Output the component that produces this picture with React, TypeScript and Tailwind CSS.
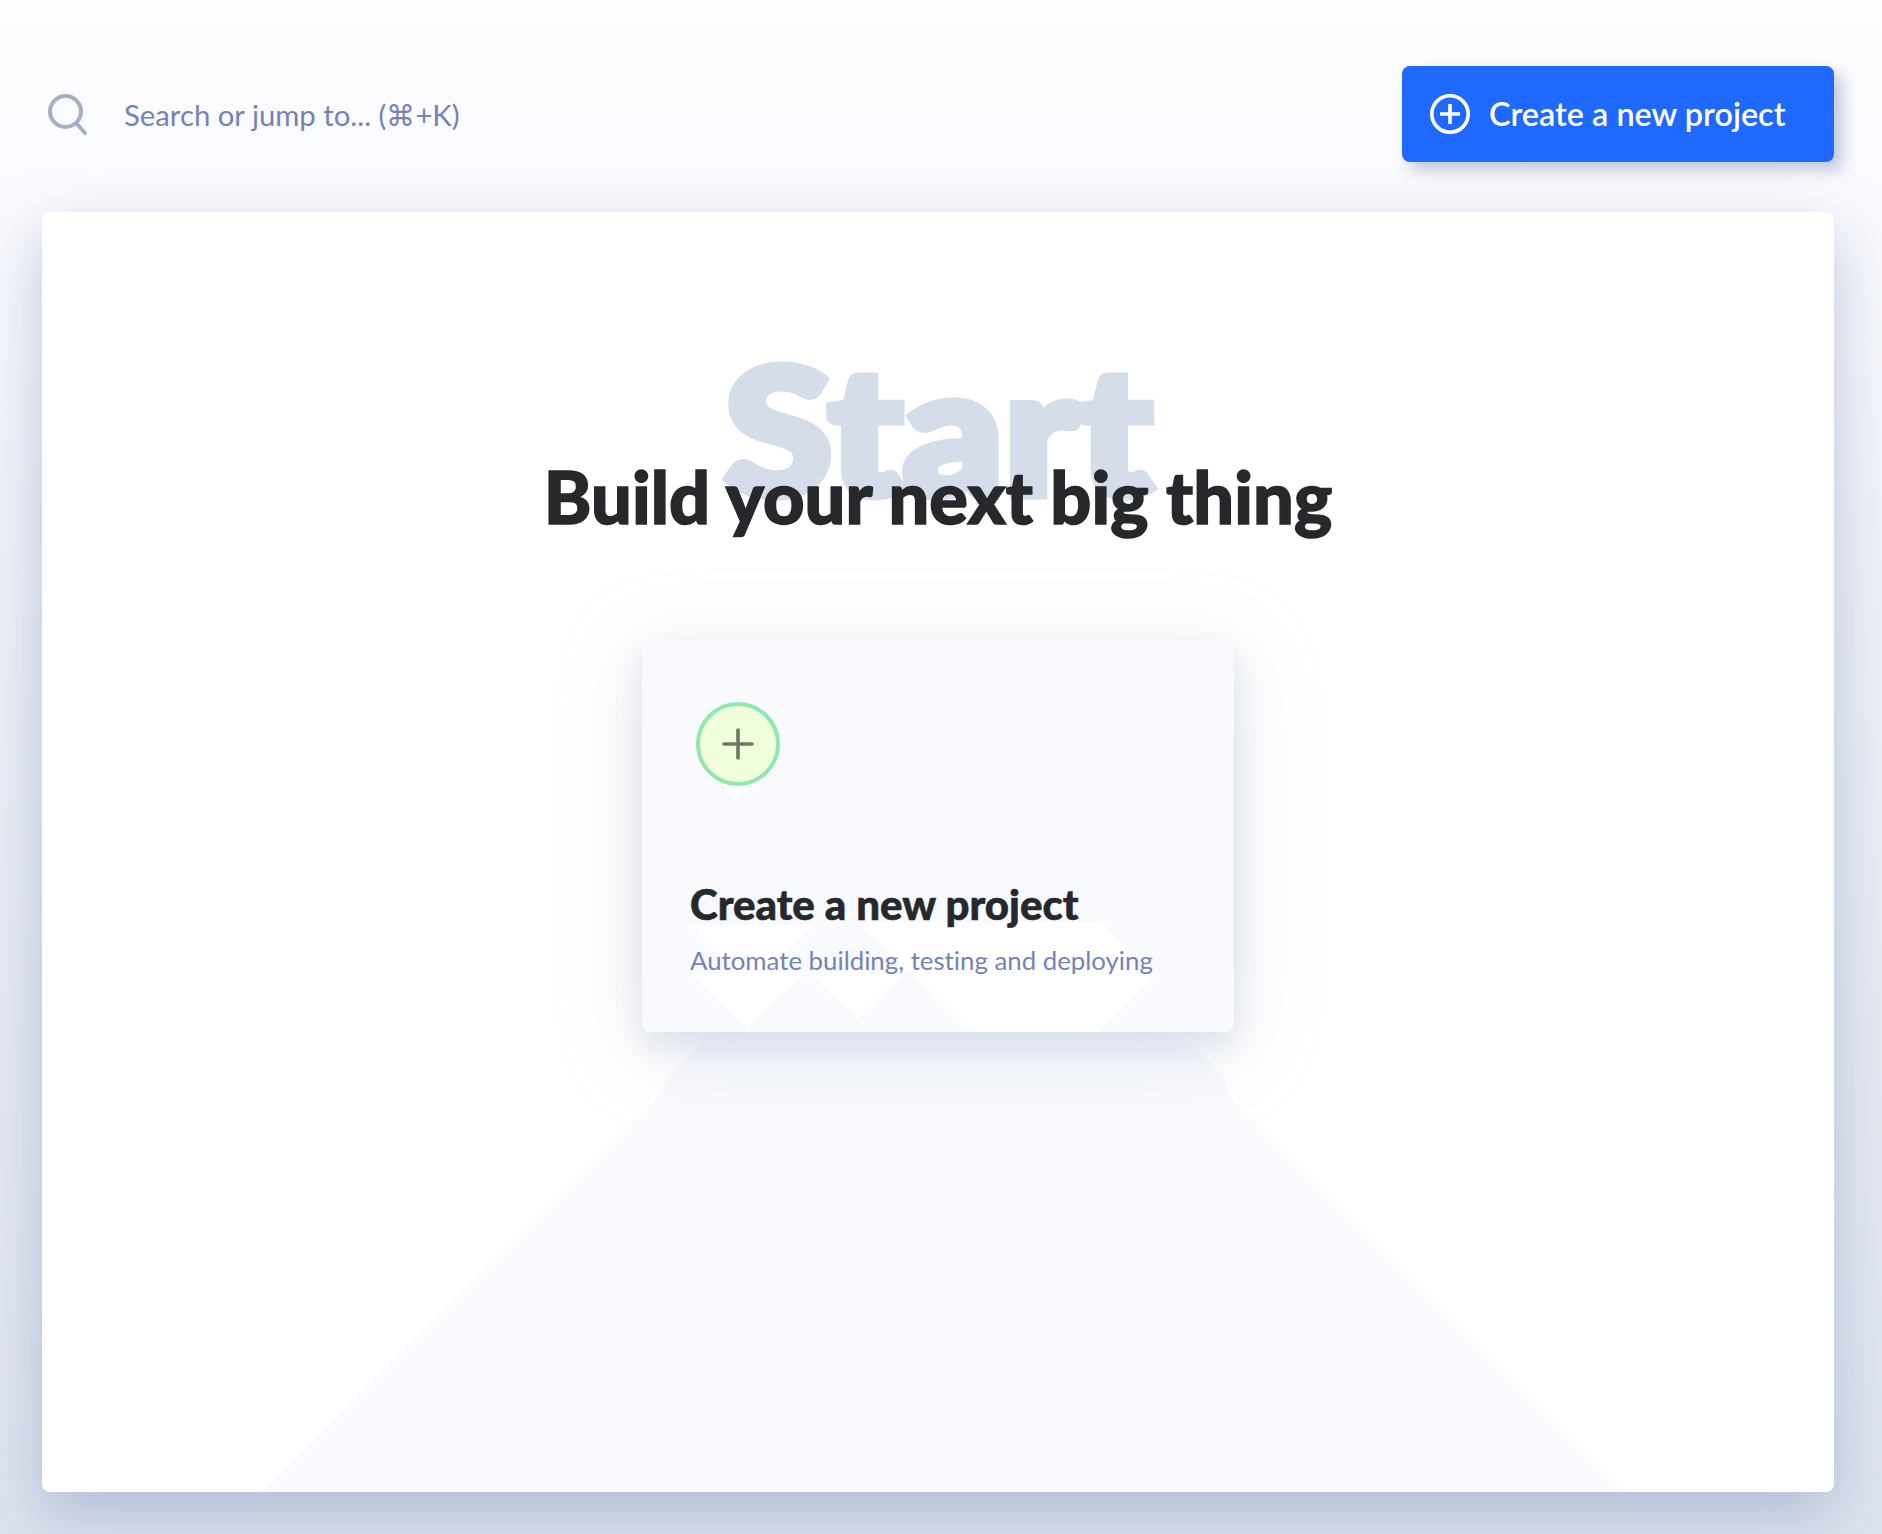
export default function App() {
  return (
    <div className="relative w-[1882px] h-[1534px] overflow-hidden bg-[linear-gradient(180deg,#fdfdff_0%,#f9fafe_14%,#eceff6_45%,#dde2ee_100%)] font-['Lato',sans-serif]">
      <header className="h-[212px] pl-[48px] pr-[48px] flex items-start justify-between">
        <div className="flex items-center mt-[91px] h-[48px]">
          <svg width="40" height="42" viewBox="0 0 40 42" fill="none" stroke="#a4aec4" strokeWidth="4" strokeLinecap="round">
            <circle cx="17.5" cy="17.5" r="15.5" />
            <path d="M29 30 L37 39" />
          </svg>
          <span className="ml-[36px] text-[29.3px] leading-[48px] text-[#7582b5]">Search or jump to... (⌘+K)</span>
        </div>
        <button className="mt-[66px] w-[432px] h-[96px] rounded-lg bg-[#1f69ff] flex items-center pl-[28px] text-white shadow-[8px_8px_16px_rgba(100,120,160,0.4)]">
          <svg width="40" height="40" viewBox="0 0 40 40" fill="none" stroke="#fff" strokeWidth="3.6">
            <circle cx="20" cy="20" r="18.2" />
            <path d="M10 20H30M20 10V30" />
          </svg>
          <span className="ml-[19px] text-[32.4px] font-semibold leading-none">Create a new project</span>
        </button>
      </header>
      <main className="relative ml-[42px] w-[1792px] h-[1280px] rounded-lg bg-white overflow-hidden shadow-[0_24px_60px_rgba(150,165,195,0.6)]">
        <svg className="absolute left-0 top-0" width="1792" height="1280" fill="#f9fafe">
          <path d="M220 1280 L617 885 L626 866 L660 830 L1148 830 L1182 866 L1187 885 L1582 1280 Z" />
        </svg>
        <div className="relative flex flex-col items-center">
          <div className="mt-[120px] text-[176px] leading-[190px] font-black text-[#d5dcea] scale-x-[1.12] [-webkit-text-stroke:9px_#d5dcea]">Start</div>
          <h1 className="relative z-10 -mt-[69px] text-[72px] leading-[86px] font-black text-[#26282b] tracking-[0.1px] [-webkit-text-stroke:1.5px_#26282b]">Build your next big thing</h1>
          <div className="relative mt-[101px] w-[592px] h-[392px] rounded-lg bg-[#f9fafe] shadow-[0_14px_24px_rgba(170,182,210,0.25),0_16px_80px_rgba(170,182,210,0.35)] overflow-hidden">
            <svg className="absolute left-0 top-0" width="592" height="392" fill="#ffffff">
              <path d="M48 285 L171 285 L109 347 Z" />
              <path d="M48 333 L163 333 L105 387 Z" />
              <path d="M166 332 L265 332 L216 378 Z" />
              <path d="M215 282 L458 282 L511 338 L455 392 L331 392 Z" />
              <path d="M178 272 L214 272 L196 288 Z" />
              <path d="M66 130 L126 130 L96 160 Z" />
            </svg>
            <div className="relative pl-[48px]">
              <div className="ml-[6px] mt-[62px] w-[84px] h-[84px] rounded-full border-4 border-[#90e8b0] bg-[#f0fedc] flex items-center justify-center">
                <svg width="32" height="32" viewBox="0 0 32 32" stroke="#687a64" strokeWidth="3.6" strokeLinecap="round">
                  <path d="M2 16H30M16 2V30" />
                </svg>
              </div>
              <div className="mt-[91px] text-[42px] leading-[54px] font-black text-[#26282b] [-webkit-text-stroke:0.6px_#26282b]">Create a new project</div>
              <div className="mt-[11px] text-[25.8px] leading-[36px] text-[#7582b5] [font-variant-ligatures:none]">Automate building, testing and deploying</div>
            </div>
          </div>
        </div>
      </main>
    </div>
  );
}
